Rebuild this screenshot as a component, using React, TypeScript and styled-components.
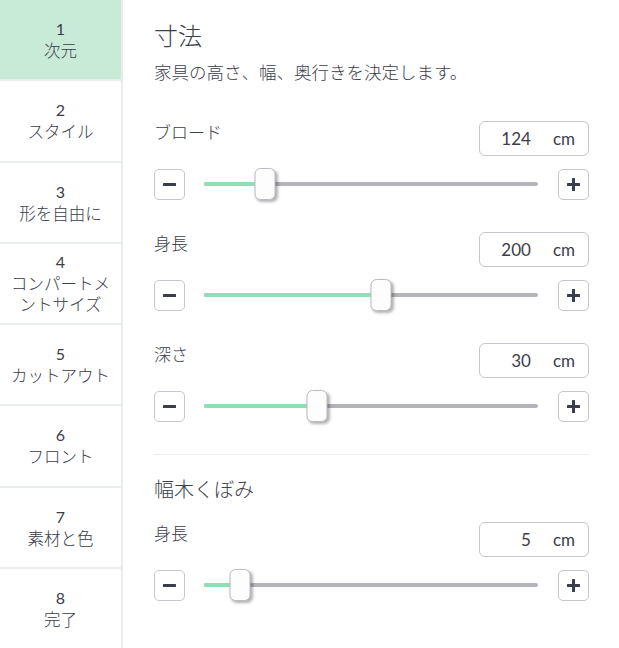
import React from 'react';
import styled, { createGlobalStyle } from 'styled-components';

const GlobalStyle = createGlobalStyle`
  html, body {
    margin: 0;
    padding: 0;
    background: #ffffff;
  }
  body {
    font-family: "Noto Sans CJK JP", "Noto Sans", sans-serif;
    font-weight: 300;
    color: #3a3d4a;
  }
`;

const Layout = styled.div`
  display: flex;
  width: 619px;
  height: 648px;
  overflow: hidden;
`;

const Sidebar = styled.nav`
  width: 121px;
  flex-shrink: 0;
  display: grid;
  grid-template-rows: repeat(8, 1fr);
  gap: 2px;
  background: #e9eded;
  border-right: 2px solid #e9eded;
`;

const StepItem = styled.div<{ active?: boolean }>`
  display: flex;
  flex-direction: column;
  align-items: center;
  justify-content: center;
  padding: 0 6px;
  text-align: center;
  background: ${p => (p.active ? '#c8ebd8' : '#ffffff')};
  font-size: 16.5px;
  line-height: 21px;
  color: #3a3d4a;
`;

const StepNumber = styled.span`
  font-family: "Lato", "Open Sans", sans-serif;
  font-weight: 400;
  font-size: 16px;
  line-height: 22px;
`;

const Main = styled.main`
  flex: 1;
  padding: 20px 30px 0 31px;
  display: flex;
  flex-direction: column;
`;

const Title = styled.h1`
  margin: 0;
  font-size: 24px;
  line-height: 30px;
  font-weight: 300;
  color: #3a3d4a;
`;

const Subtitle = styled.p`
  margin: 10px 0 0;
  font-size: 17.5px;
  line-height: 24px;
  color: #3a3d4a;
`;

const Field = styled.div<{ gapTop: number }>`
  margin-top: ${p => p.gapTop}px;
  display: flex;
  flex-direction: column;
  gap: 12px;
`;

const FieldHead = styled.div`
  display: flex;
  justify-content: space-between;
  align-items: flex-start;
`;

const FieldLabel = styled.span`
  font-size: 17px;
  line-height: 22px;
  color: #3a3d4a;
`;

const ValueBox = styled.div`
  box-sizing: border-box;
  width: 110px;
  height: 35px;
  border: 1px solid #c5c7cc;
  border-radius: 6px;
  display: flex;
  align-items: center;
  justify-content: flex-end;
  padding-right: 13px;
  gap: 22px;
  font-family: "Lato", "Open Sans", sans-serif;
  font-weight: 400;
  font-size: 17px;
  color: #3a3d4a;
`;

const SliderRow = styled.div`
  display: flex;
  align-items: center;
  height: 32px;
`;

const StepButton = styled.button`
  box-sizing: border-box;
  width: 31px;
  height: 31px;
  padding: 0;
  border: 1px solid #c5c7cc;
  border-radius: 5px;
  background: #ffffff;
  display: flex;
  align-items: center;
  justify-content: center;
  flex-shrink: 0;
`;

const Track = styled.div`
  position: relative;
  flex: 1;
  height: 4px;
  margin: 0 20px 0 19px;
  border-radius: 2px;
  background: #b3b5bb;
`;

const Fill = styled.div`
  position: absolute;
  left: 0;
  top: 0;
  bottom: 0;
  background: #8ee0b4;
  border-radius: 2px 0 0 2px;
`;

const Thumb = styled.div`
  position: absolute;
  top: 50%;
  box-sizing: border-box;
  width: 21px;
  height: 32px;
  transform: translate(-50%, -50%);
  background: #fdfdfd;
  border: 1px solid #b9bbc2;
  border-radius: 6px;
  box-shadow: 2px 2px 3px rgba(0, 0, 0, 0.3);
`;

const Divider = styled.hr`
  margin: 32px 0 0;
  border: none;
  border-top: 1px solid #eeeeee;
`;

const SectionTitle = styled.h2`
  margin: 21px 0 0;
  font-size: 20px;
  line-height: 26px;
  font-weight: 300;
  color: #3a3d4a;
`;

const MinusIcon = () => (
  <svg width="13" height="13" viewBox="0 0 13 13">
    <rect x="0" y="5" width="13" height="3" rx="0.5" fill="#3a3d4c" />
  </svg>
);

const PlusIcon = () => (
  <svg width="13" height="13" viewBox="0 0 13 13">
    <rect x="0" y="5" width="13" height="3" rx="0.5" fill="#3a3d4c" />
    <rect x="5" y="0" width="3" height="13" rx="0.5" fill="#3a3d4c" />
  </svg>
);

const steps = ['次元', 'スタイル', '形を自由に', 'コンパートメントサイズ', 'カットアウト', 'フロント', '素材と色', '完了'];

interface SliderFieldProps {
  label: string;
  value: number;
  percent: number;
  gapTop: number;
}

const SliderField: React.FC<SliderFieldProps> = ({ label, value, percent, gapTop }) => (
  <Field gapTop={gapTop}>
    <FieldHead>
      <FieldLabel>{label}</FieldLabel>
      <ValueBox>
        <span>{value}</span>
        <span>cm</span>
      </ValueBox>
    </FieldHead>
    <SliderRow>
      <StepButton aria-label="minus">
        <MinusIcon />
      </StepButton>
      <Track>
        <Fill style={{ width: `${percent}%` }} />
        <Thumb style={{ left: `${percent}%` }} />
      </Track>
      <StepButton aria-label="plus">
        <PlusIcon />
      </StepButton>
    </SliderRow>
  </Field>
);

const App: React.FC = () => {
  return (
    <>
      <GlobalStyle />
      <Layout>
        <Sidebar>
          {steps.map((s, i) => (
            <StepItem key={s} active={i === 0}>
              <StepNumber>{i + 1}</StepNumber>
              <span>{s}</span>
            </StepItem>
          ))}
        </Sidebar>
        <Main>
          <Title>寸法</Title>
          <Subtitle>家具の高さ、幅、奥行きを決定します。</Subtitle>
          <SliderField label="ブロード" value={124} percent={18.3} gapTop={37} />
          <SliderField label="身長" value={200} percent={53} gapTop={32} />
          <SliderField label="深さ" value={30} percent={33.8} gapTop={32} />
          <Divider />
          <SectionTitle>幅木くぼみ</SectionTitle>
          <SliderField label="身長" value={5} percent={10.8} gapTop={20} />
        </Main>
      </Layout>
    </>
  );
};

export default App;
